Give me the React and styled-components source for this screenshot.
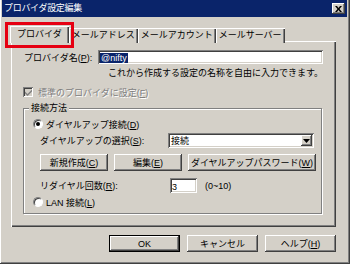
import React from "react";
import styled, { createGlobalStyle } from "styled-components";

const GlobalStyle = createGlobalStyle`
  html, body {
    margin: 0;
    padding: 0;
    background: #d4d0c8;
  }
  body {
    font-family: "Liberation Sans", "Noto Sans CJK JP", sans-serif;
    font-size: 9px;
    color: #000;
  }
  * {
    box-sizing: border-box;
  }
`;

const raised = `
  box-shadow: inset -1px -1px #404040, inset 1px 1px #ffffff,
    inset -2px -2px #808080;
`;

const sunken = `
  box-shadow: inset 1px 1px #808080, inset -1px -1px #ffffff,
    inset 2px 2px #404040, inset -2px -2px #d4d0c8;
`;

export default function App() {
  return (
    <>
      <GlobalStyle />
      <Window>
        <TitleBar>
          <Title>プロバイダ設定編集</Title>
          <CloseButton>
            <svg width="7" height="6" viewBox="0 0 7 6">
              <path d="M0 0h2l1.5 2 1.5-2h2L4.5 3 7 6H5L3.5 4 2 6H0l2.5-3z" fill="#000" />
            </svg>
          </CloseButton>
        </TitleBar>

        <Body>
          <TabStrip>
            <Tab active>
              プロバイダ
              <Highlight />
            </Tab>
            <Tab>メールアドレス</Tab>
            <Tab>メールアカウント</Tab>
            <Tab>メールサーバー</Tab>
          </TabStrip>

          <Panel>
            <FieldRow>
              <Label width={74}>
                プロバイダ名(<u>P</u>):
              </Label>
              <TextBox grow>
                <Selection>@nifty</Selection>
              </TextBox>
            </FieldRow>
            <Hint>これから作成する設定の名称を自由に入力できます。</Hint>

            <CheckRow>
              <CheckBox>
                <svg width="7" height="7" viewBox="0 0 7 7">
                  <path d="M0 2.5l2.5 2.5L7 0.5v2L2.5 7 0 4.5z" fill="#808080" />
                </svg>
              </CheckBox>
              <span>
                標準のプロバイダに設定(<u>F</u>)
              </span>
            </CheckRow>

            <Group>
              <Legend>接続方法</Legend>
              <OptionRow first>
                <Radio checked />
                <span>
                  ダイヤルアップ接続(<u>D</u>)
                </span>
              </OptionRow>
              <SubRow>
                <Label width={128}>
                  ダイヤルアップの選択(<u>S</u>):
                </Label>
                <Select>
                  接続
                  <DropArrow>
                    <svg width="7" height="4" viewBox="0 0 7 4">
                      <path d="M0 0h7L3.5 4z" fill="#000" />
                    </svg>
                  </DropArrow>
                </Select>
              </SubRow>
              <ButtonRow>
                <Button width={68}>
                  <span>
                    新規作成(<u>C</u>)
                  </span>
                </Button>
                <Button width={68}>
                  <span>
                    編集(<u>E</u>)
                  </span>
                </Button>
                <Button width={128}>
                  <span>
                    ダイヤルアップパスワード(<u>W</u>)
                  </span>
                </Button>
              </ButtonRow>
              <SubRow gap={7}>
                <Label width={130}>
                  リダイヤル回数(<u>R</u>):
                </Label>
                <TextBox width={27}>3</TextBox>
                <Range>(0~10)</Range>
              </SubRow>
              <OptionRow>
                <Radio />
                <span>
                  LAN 接続(<u>L</u>)
                </span>
              </OptionRow>
            </Group>
          </Panel>

          <DialogButtons>
            <Button width={71} isDefault>
              OK
            </Button>
            <Button width={71}>キャンセル</Button>
            <Button width={71}>
              <span>
                ヘルプ(<u>H</u>)
              </span>
            </Button>
          </DialogButtons>
        </Body>
      </Window>
    </>
  );
}

const Window = styled.div`
  width: 350px;
  height: 264px;
  background: #d4d0c8;
  padding: 0 3px 2px 2px;
  display: flex;
  flex-direction: column;
  overflow: hidden;
  box-shadow: inset -1px -1px #404040, inset 1px 0 #ffffff,
    inset -2px -2px #808080;
`;

const TitleBar = styled.div`
  height: 17px;
  background: #0a246a;
  color: #fff;
  display: flex;
  align-items: center;
  justify-content: space-between;
  padding: 0 2px 0 2px;
`;

const Title = styled.span`
  font-size: 9px;
  line-height: 1;
  letter-spacing: -0.3px;
`;

const CloseButton = styled.div`
  width: 13px;
  height: 11px;
  background: #d4d0c8;
  display: flex;
  align-items: center;
  justify-content: center;
  ${raised}
`;

const Body = styled.div`
  padding: 9px 0 0 8px;
  display: flex;
  flex-direction: column;
`;

const TabStrip = styled.div`
  display: flex;
  align-items: flex-end;
  height: 17px;
`;

const Tab = styled.div`
  position: relative;
  height: ${({ active }) => (active ? "17px" : "15px")};
  padding: ${({ active }) => (active ? "0 7px 3px" : "0 3px 3px")};
  display: flex;
  align-items: center;
  white-space: nowrap;
  background: #d4d0c8;
  z-index: ${({ active }) => (active ? 1 : 0)};
  box-shadow: inset 1px 1px #ffffff, inset -1px 0 #404040, inset -2px 0 #808080;
`;

const Highlight = styled.span`
  position: absolute;
  left: -5px;
  right: -5px;
  top: -4px;
  bottom: -5px;
  border: 3px solid #e60012;
  pointer-events: none;
  z-index: 2;
`;

const Panel = styled.div`
  width: 325px;
  height: 186px;
  margin: -2px 0 0 1px;
  padding: 9px 13px 0 13px;
  display: flex;
  flex-direction: column;
  box-shadow: inset 1px 1px #ffffff, inset -1px -1px #404040,
    inset -2px -2px #808080;
`;

const FieldRow = styled.div`
  display: flex;
  align-items: center;
  height: 14px;
`;

const Label = styled.span`
  width: ${({ width }) => width}px;
  flex: none;
  white-space: nowrap;
`;

const TextBox = styled.div`
  ${({ grow }) => (grow ? "flex: 1;" : "")}
  width: ${({ width }) => (width ? `${width}px` : "auto")};
  height: ${({ grow }) => (grow ? "14px" : "15px")};
  background: #fff;
  padding: 2px 3px 0 2px;
  line-height: 10px;
  display: flex;
  align-items: center;
  ${sunken}
`;

const Selection = styled.span`
  background: #0a246a;
  color: #fff;
  padding: 0 1px;
  line-height: 10px;
  margin-top: -1px;
`;

const Hint = styled.div`
  margin-top: 3px;
  height: 12px;
  line-height: 12px;
  padding-left: 84px;
  white-space: nowrap;
`;

const CheckRow = styled.div`
  margin: 7px 0 0 -1px;
  height: 12px;
  display: flex;
  align-items: center;
  gap: 5px;
  color: #808080;
  text-shadow: 1px 1px #ffffff;
  white-space: nowrap;
`;

const CheckBox = styled.span`
  width: 10px;
  height: 10px;
  flex: none;
  background: #d4d0c8;
  display: flex;
  align-items: center;
  justify-content: center;
  ${sunken}
`;

const Group = styled.fieldset`
  margin: 4px 1px 0 -1px;
  padding: 0 0 5px 9px;
  border: 1px solid #808080;
  box-shadow: inset 1px 1px #ffffff, 1px 1px #ffffff;
  min-width: 0;
`;

const Legend = styled.legend`
  margin-left: -4px;
  padding: 0 2px;
  line-height: 12px;
  background: #d4d0c8;
`;

const OptionRow = styled.div`
  margin-top: ${({ first }) => (first ? "4px" : "3px")};
  height: 12px;
  display: flex;
  align-items: center;
  gap: 3px;
  white-space: nowrap;
`;

const Radio = styled.span`
  width: 10px;
  height: 10px;
  flex: none;
  border-radius: 50%;
  background: #fff;
  border: 1px solid;
  border-color: #808080 #ffffff #ffffff #808080;
  box-shadow: inset 1px 1px #404040;
  display: flex;
  align-items: center;
  justify-content: center;

  &::after {
    content: "";
    width: 4px;
    height: 4px;
    border-radius: 50%;
    background: ${({ checked }) => (checked ? "#000" : "transparent")};
  }
`;

const SubRow = styled.div`
  margin-top: ${({ gap }) => (gap ? gap : 3)}px;
  padding-left: 7px;
  height: 15px;
  display: flex;
  align-items: center;
`;

const Select = styled.div`
  width: 146px;
  height: 15px;
  background: #fff;
  padding: 2px 2px 2px 3px;
  display: flex;
  align-items: center;
  justify-content: space-between;
  ${sunken}
`;

const DropArrow = styled.span`
  width: 11px;
  height: 11px;
  background: #d4d0c8;
  display: flex;
  align-items: center;
  justify-content: center;
  ${raised}
`;

const ButtonRow = styled.div`
  margin-top: 6px;
  padding-left: 7px;
  display: flex;
  gap: 6px;
`;

const Button = styled.button`
  width: ${({ width }) => width}px;
  height: 17px;
  padding: 0;
  font: inherit;
  color: #000;
  white-space: nowrap;
  background: #d4d0c8;
  border: ${({ isDefault }) => (isDefault ? "1px solid #000" : "none")};
  display: flex;
  align-items: center;
  justify-content: center;
  ${raised}
`;

const Range = styled.span`
  margin-left: 8px;
`;

const DialogButtons = styled.div`
  width: 325px;
  margin: 8px 0 0 1px;
  display: flex;
  justify-content: flex-end;
  gap: 7px;
`;
